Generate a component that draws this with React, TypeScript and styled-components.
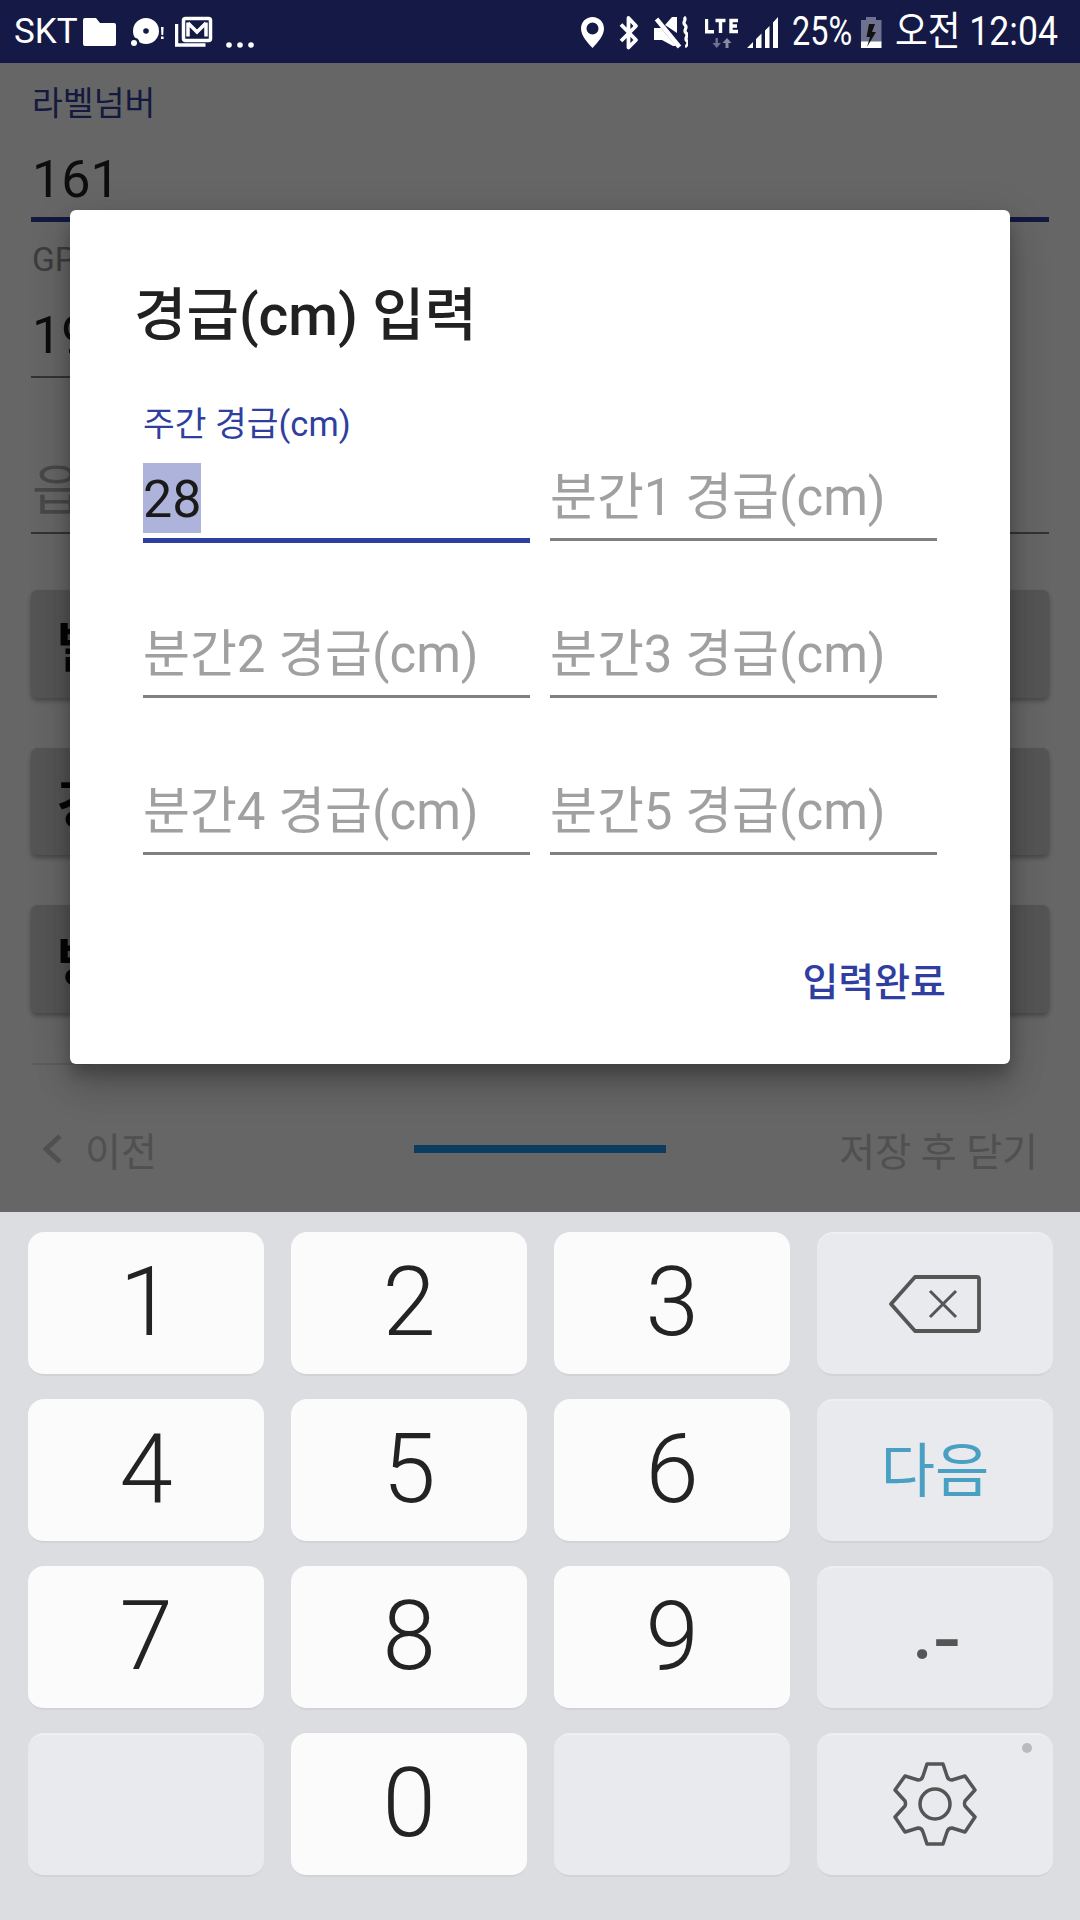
import React from 'react';
import styled, { createGlobalStyle } from 'styled-components';

const GlobalStyle = createGlobalStyle`
    html, body {
        margin: 0;
        padding: 0;
        background: #dcdde1;
    }
    * {
        box-sizing: border-box;
    }
`;

const Screen = styled.div`
    position: relative;
    width: 1080px;
    height: 1920px;
    overflow: hidden;
    display: flex;
    flex-direction: column;
    font-family: Roboto, "Noto Sans CJK KR", sans-serif;
`;

const StatusBar = styled.div`
    height: 63px;
    flex: none;
    display: flex;
    align-items: center;
    padding: 0 14px;
    background-color: #141a45;
    color: #ffffff;
`;

const Carrier = styled.span`
    width: 61px;
    font-size: 35px;
    line-height: 63px;
    white-space: nowrap;
`;

const StatusText = styled.span<{ $width: number; $left: number; $scale: number }>`
    width: ${p => p.$width}px;
    margin-left: ${p => p.$left}px;
    font-size: 40px;
    line-height: 63px;
    white-space: nowrap;
    transform: scaleX(${p => p.$scale});
    transform-origin: left center;
`;

const StatusIcon = styled.svg<{ $left: number }>`
    flex: none;
    height: 63px;
    margin-left: ${p => p.$left}px;
`;

const Main = styled.div`
    position: relative;
    flex: 1;
    min-height: 0;
    display: flex;
    flex-direction: column;
    background-color: #ffffff;
`;

const Form = styled.div`
    flex: 1;
    min-height: 0;
    overflow: hidden;
    padding: 21px 31px 0;
    display: flex;
    flex-direction: column;
`;

const PageField = styled.div<{ $width?: number; $focused?: boolean; $top?: number }>`
    width: ${p => (p.$width ? `${p.$width}px` : 'auto')};
    margin-top: ${p => p.$top || 0}px;
    border-bottom: ${p => (p.$focused ? '5px solid #303f9f' : '2px solid #808080')};
`;

const PageLabel = styled.div<{ $focused?: boolean }>`
    font-size: 33.5px;
    line-height: 40px;
    padding-left: 1px;
    color: ${p => (p.$focused ? '#303f9f' : '#9a9a9a')};
`;

const PageValue = styled.div<{ $placeholder?: boolean; $top: number; $bottom: number }>`
    margin-top: ${p => p.$top}px;
    margin-bottom: ${p => p.$bottom}px;
    padding-left: 1px;
    font-size: ${p => (p.$placeholder ? 54 : 52)}px;
    line-height: 70px;
    color: ${p => (p.$placeholder ? '#b5b5b5' : '#222222')};
`;

const SectionCard = styled.div`
    flex: none;
    height: 107.5px;
    margin-bottom: 50px;
    padding-left: 26px;
    display: flex;
    align-items: center;
    border-radius: 6px;
    background-color: #d4d4d4;
    box-shadow: 0 3px 5px rgba(0, 0, 0, 0.3);
    font-size: 54px;
    font-weight: 700;
    color: #111111;
`;

const CardList = styled.div`
    margin-top: 56px;
    display: flex;
    flex-direction: column;
`;

const Divider = styled.div`
    width: 60px;
    height: 2px;
    background-color: #e8e8e8;
`;

const BottomNav = styled.div`
    flex: none;
    height: 124px;
    padding: 0 42px 3px 41px;
    display: grid;
    grid-template-columns: 1fr auto 1fr;
    align-items: center;
    font-size: 39px;
    color: #c8c8c8;
`;

const BackButton = styled.div`
    display: flex;
    align-items: center;
    gap: 22px;
`;

const SaveButton = styled.div`
    text-align: right;
`;

const ProgressBar = styled.div`
    width: 252px;
    height: 8px;
    background-color: #2196f3;
`;

const Scrim = styled.div`
    position: absolute;
    inset: 0;
    padding-bottom: 1px;
    display: flex;
    align-items: center;
    justify-content: center;
    background-color: rgba(0, 0, 0, 0.6);
`;

const Dialog = styled.div`
    width: 940px;
    padding-top: 76px;
    border-radius: 6px;
    background-color: #ffffff;
    box-shadow: 0 24px 38px rgba(0, 0, 0, 0.14), 0 9px 46px rgba(0, 0, 0, 0.12), 0 11px 15px rgba(0, 0, 0, 0.2);
`;

const DialogTitle = styled.div`
    margin-left: 64px;
    font-size: 57px;
    line-height: 60px;
    font-weight: 500;
    white-space: nowrap;
    color: #212121;
`;

const FieldGrid = styled.div`
    margin-top: 38px;
    padding: 0 73px;
    display: grid;
    grid-template-columns: 387px 387px;
    grid-auto-rows: 157px;
    column-gap: 20px;
    align-items: start;
`;

const Field = styled.div<{ $focused?: boolean }>`
    height: ${p => (p.$focused ? 159 : 157)}px;
    display: flex;
    flex-direction: column;
    justify-content: flex-end;
    padding-bottom: 5px;
    border-bottom: ${p => (p.$focused ? '5px solid #303f9f' : '3px solid #808080')};
`;

const FloatLabel = styled.div`
    margin-bottom: 19px;
    margin-top: -4px;
    font-size: 34.5px;
    line-height: 40px;
    white-space: nowrap;
    color: #303f9f;
`;

const FieldText = styled.div<{ $placeholder?: boolean }>`
    height: 70px;
    font-size: ${p => (p.$placeholder ? 51 : 52)}px;
    line-height: 70px;
    white-space: nowrap;
    color: ${p => (p.$placeholder ? '#a0a0a0' : '#1a1a1a')};
`;

const Selection = styled.span`
    display: inline-block;
    height: 70px;
    line-height: 74px;
    vertical-align: top;
    background-color: #adb3da;
`;

const DialogActions = styled.div`
    margin-top: 104px;
    padding: 0 64px 57px 0;
    text-align: right;
    font-size: 39px;
    line-height: 48px;
    font-weight: 500;
    color: #303f9f;
`;

const Keyboard = styled.div`
    height: 708px;
    flex: none;
    padding: 20px 27px 43px 28px;
    display: grid;
    grid-template-columns: repeat(4, 236px);
    grid-auto-rows: 144px;
    gap: 23px 27px;
    background-color: #dcdde1;
`;

const Key = styled.div<{ $side?: boolean }>`
    position: relative;
    display: flex;
    align-items: center;
    justify-content: center;
    padding-bottom: ${p => (p.$side ? 0 : 5)}px;
    border-radius: 16px;
    background-color: ${p => (p.$side ? '#e9eaee' : '#fbfbfb')};
    border-bottom: 2px solid #d2d3d7;
    border-top: 2px solid ${p => (p.$side ? '#eeeff2' : '#fbfbfb')};
    font-size: 96px;
    font-weight: 300;
    line-height: 1;
    color: #232323;
`;

const NextLabel = styled.span`
    font-size: 59px;
    font-weight: 400;
    color: #4aa0c2;
`;

const SymbolLabel = styled.span`
    font-size: 90px;
    font-weight: 400;
    margin-top: -8px;
    color: #555555;
`;

const SymbolGlyph = styled.span<{ $shift: number }>`
    vertical-align: ${p => p.$shift}px;
`;

const KeyBadge = styled.span`
    position: absolute;
    top: 8px;
    right: 21px;
    width: 10px;
    height: 10px;
    border-radius: 50%;
    background-color: #b9babd;
`;

const digitRows = [
    ['1', '2', '3'],
    ['4', '5', '6'],
    ['7', '8', '9'],
];

const LeftIcons = () => (
    <>
        <StatusIcon $left={8} width={33} viewBox="83 0 33 63">
            <path d="M85 18h11l4 5h14a2 2 0 0 1 2 2v19a2 2 0 0 1-2 2H85a2 2 0 0 1-2-2V20a2 2 0 0 1 2-2z" fill="#fff" />
        </StatusIcon>
        <StatusIcon $left={14} width={38} viewBox="130 0 38 63">
            <circle cx="146" cy="31" r="13" fill="#fff" />
            <circle cx="146" cy="31" r="2.8" fill="#141a45" />
            <circle cx="134" cy="43" r="5.5" fill="#141a45" />
            <circle cx="134" cy="43" r="3" fill="#fff" />
            <path d="M161 27h2.6l-.4 8h-1.8zM161 36.5h2.6V39H161z" fill="#fff" />
        </StatusIcon>
        <StatusIcon $left={7} width={38} viewBox="175 0 38 63">
            <path d="M176.500 24v21h29" fill="none" stroke="#fff" strokeWidth="3.500" />
            <rect x="183.500" y="18.500" width="27" height="22" rx="2" fill="none" stroke="#fff" strokeWidth="3.500" />
            <path d="M188 22.500v14M188 23l9 9 9-9M206 22.500v14" fill="none" stroke="#fff" strokeWidth="3.500" />
        </StatusIcon>
        <StatusIcon $left={12} width={30} viewBox="224 0 30 63">
            <circle cx="228" cy="45" r="2.800" fill="#fff" />
            <circle cx="239" cy="45" r="2.800" fill="#fff" />
            <circle cx="250" cy="45" r="2.800" fill="#fff" />
        </StatusIcon>
    </>
);

const RightIcons = () => (
    <>
        <StatusIcon $left={326} width={23} viewBox="580 0 23 63">
            <path fillRule="evenodd" fill="#fff" d="M591.500 17c6.400 0 11.500 5.100 11.500 11.500 0 7-6 13.500-11.500 19.500-5.500-6-11.500-12.500-11.500-19.500 0-6.400 5.100-11.500 11.500-11.500zm0 5.500a6 6 0 1 0 0 12 6 6 0 0 0 0-12z" />
        </StatusIcon>
        <StatusIcon $left={15} width={20} viewBox="618 0 20 63">
            <path d="M620 24.500l15 15.500-7.500 7.500V18l7.500 8-15 15" fill="none" stroke="#fff" strokeWidth="3.800" strokeLinejoin="round" />
        </StatusIcon>
        <StatusIcon $left={15} width={34} viewBox="653 0 34 63">
            <path d="M653 28h7l15 18h-3l-11-6h-8zM671 17h5v16l-12-8z" fill="#fff" />
            <path d="M655.500 19l23 28" stroke="#fff" strokeWidth="4.500" />
            <path d="M683 17c3.500 3-2.500 5 1 8s-2.500 5 1 8-2.500 5 1 8-2 4 0 6" fill="none" stroke="#fff" strokeWidth="3.200" />
        </StatusIcon>
        <StatusIcon $left={17} width={33} viewBox="704 0 33 63">
            <path d="M705.500 19v12.700h7.500M714.500 20.500h10M719.500 20.500V33M737 20.500h-7V31.500h7M730 26h6" fill="none" stroke="#fff" strokeWidth="3.400" />
            <path d="M714.500 38v5h-3l4.200 5 4.200-5h-3v-5z" fill="#6e7190" />
            <path d="M724.500 48v-5h-3l4.500-5 4.500 5h-3v5z" fill="#8a8ca5" />
        </StatusIcon>
        <StatusIcon $left={9} width={31} viewBox="746 0 31 63">
            <path d="M746 48l6-6v6zM755 39l5.500-5.500V48H755zM764 30.500l4.500-4.500v22H764zM772 22.500l5-5.500v31h-5z" fill="#fff" />
        </StatusIcon>
        <StatusText $left={14} $width={61} $scale={0.81}>25%</StatusText>
        <StatusIcon $left={8} width={21} viewBox="861 0 21 63">
            <path d="M866 17h10v3h5.500v22H861V20h5z" fill="#6e7190" />
            <rect x="861" y="41.500" width="20.500" height="6.500" fill="#fff" />
            <path d="M875 24h-6l-2.500 13h3.500l-3 10 9-15h-4z" fill="#111111" />
        </StatusIcon>
        <StatusText $left={13} $width={164} $scale={0.89}>오전 12:04</StatusText>
    </>
);

const BackspaceIcon = () => (
    <svg width="92" height="58" viewBox="0 0 92 58">
        <path d="M26 2h62a2 2 0 0 1 2 2v50a2 2 0 0 1-2 2H26L2 29z" fill="none" stroke="#555555" strokeWidth="3.800" strokeLinejoin="round" />
        <path d="M41 16l26 26M67 16L41 42" fill="none" stroke="#555555" strokeWidth="3" />
    </svg>
);

const GearIcon = () => (
    <svg width="100" height="100" viewBox="0 0 100 100">
        <path
            d="M42 9h16l4 12q1 4 5 4l13-4 10 14-10 11q-1 3 0 5l10 11-10 15-13-4q-4 0-5 4l-4 12H42l-4-12q-1-4-5-4l-13 4-10-15 10-11q1-2 0-5L10 35l10-14 13 4q4 0 5-4z"
            fill="none"
            stroke="#555555"
            strokeWidth="3.500"
            strokeLinejoin="round"
        />
        <circle cx="50" cy="49" r="15" fill="none" stroke="#555555" strokeWidth="3.500" />
    </svg>
);

const ChevronLeft = () => (
    <svg width="22" height="32" viewBox="0 0 22 32">
        <path d="M19 3L5 16l14 13" fill="none" stroke="#c8c8c8" strokeWidth="5" />
    </svg>
);

const App: React.FC = () => {
    return (
        <Screen>
            <GlobalStyle />
            <StatusBar>
                <Carrier>SKT</Carrier>
                <LeftIcons />
                <RightIcons />
            </StatusBar>
            <Main>
                <Form>
                    <PageField $focused>
                        <PageLabel $focused>라벨넘버</PageLabel>
                        <PageValue $top={21} $bottom={2}>161</PageValue>
                    </PageField>
                    <PageField $width={700} $top={18}>
                        <PageLabel>GPS</PageLabel>
                        <PageValue $top={21} $bottom={5}>19</PageValue>
                    </PageField>
                    <PageField>
                        <PageValue $placeholder $top={79} $bottom={5}>읍</PageValue>
                    </PageField>
                    <CardList>
                        <SectionCard>발</SectionCard>
                        <SectionCard>강</SectionCard>
                        <SectionCard>방</SectionCard>
                        <Divider />
                    </CardList>
                </Form>
                <BottomNav>
                    <BackButton>
                        <ChevronLeft />
                        이전
                    </BackButton>
                    <ProgressBar />
                    <SaveButton>저장 후 닫기</SaveButton>
                </BottomNav>
                <Scrim>
                    <Dialog>
                        <DialogTitle>경급(cm) 입력</DialogTitle>
                        <FieldGrid>
                            <Field $focused>
                                <FloatLabel>주간 경급(cm)</FloatLabel>
                                <FieldText><Selection>28</Selection></FieldText>
                            </Field>
                            <Field><FieldText $placeholder>분간1 경급(cm)</FieldText></Field>
                            <Field><FieldText $placeholder>분간2 경급(cm)</FieldText></Field>
                            <Field><FieldText $placeholder>분간3 경급(cm)</FieldText></Field>
                            <Field><FieldText $placeholder>분간4 경급(cm)</FieldText></Field>
                            <Field><FieldText $placeholder>분간5 경급(cm)</FieldText></Field>
                        </FieldGrid>
                        <DialogActions>입력완료</DialogActions>
                    </Dialog>
                </Scrim>
            </Main>
            <Keyboard>
                {digitRows.map((row, i) => (
                    <React.Fragment key={i}>
                        {row.map(d => <Key key={d}>{d}</Key>)}
                        {i === 0 && <Key $side><BackspaceIcon /></Key>}
                        {i === 1 && <Key $side><NextLabel>다음</NextLabel></Key>}
                        {i === 2 && (
                            <Key $side>
                                <SymbolLabel>
                                    <SymbolGlyph $shift={7}>.</SymbolGlyph>
                                    <SymbolGlyph $shift={-5}>-</SymbolGlyph>
                                </SymbolLabel>
                            </Key>
                        )}
                    </React.Fragment>
                ))}
                <Key $side />
                <Key>0</Key>
                <Key $side />
                <Key $side>
                    <GearIcon />
                    <KeyBadge />
                </Key>
            </Keyboard>
        </Screen>
    );
};

export default App;
